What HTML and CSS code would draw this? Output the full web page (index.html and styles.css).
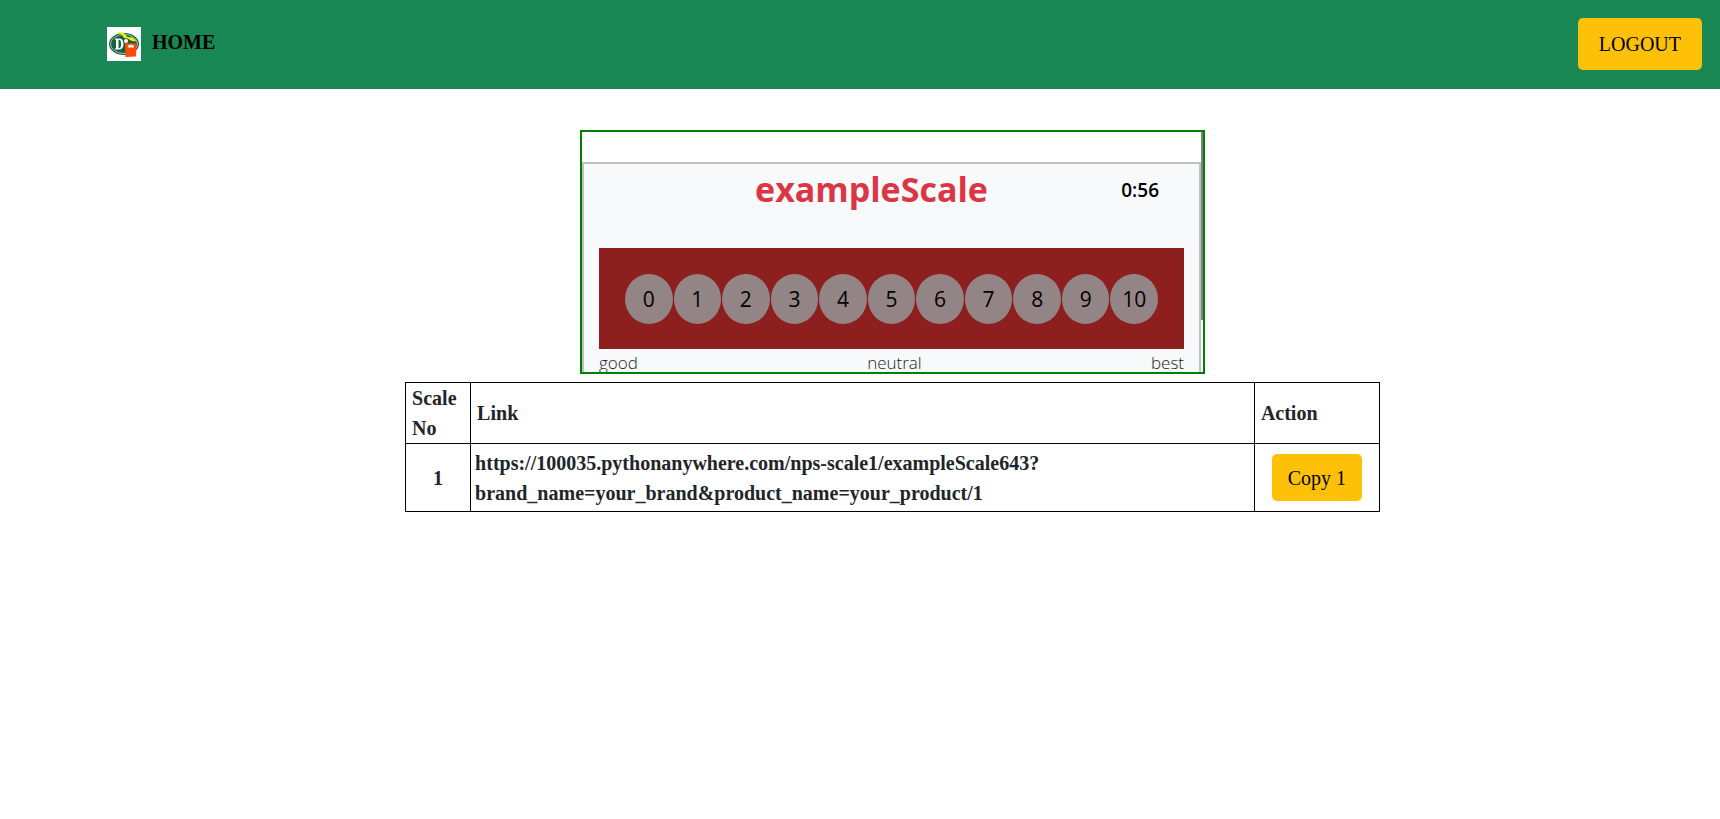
FILE: index.html
```html
<!DOCTYPE html>
<html lang="en">
<head>
<meta charset="utf-8">
<title>Scale links</title>
<link rel="stylesheet" href="styles.css">
</head>
<body>
<header class="navbar">
  <a class="brand" href="#">
    <svg class="logo" viewBox="0 0 34 34" aria-hidden="true">
      <rect width="34" height="34" fill="#fff"/>
      <ellipse cx="17" cy="17" rx="15" ry="11" fill="#17603f"/>
      <ellipse cx="17" cy="17" rx="13.500" ry="9.500" fill="none" stroke="#c4dccf" stroke-width=".8"/>
      <path fill="#fff" fill-rule="evenodd" d="M8 11.500h4c3 0 4.500 2 4.500 5.500s-1.500 5.500-4.500 5.500H8v-1l1-.5v-8L8 12.500zM11.500 12.700v8.600c2 .3 2.600-1.600 2.600-4.300s-.6-4.600-2.600-4.300z"/>
      <path d="M10 5l6 .5 4.500 4.500 5 .5 4.500 4-5-.5-4.500-2.500-3.500-.5-2-3z" fill="#f2ee12"/>
      <circle cx="19" cy="14" r="2" fill="#fff"/>
      <path d="M18 16l11.500.5-.5 13-10.500.5z" fill="#ff4a0a"/>
      <path d="M21 19c1-1.700 5-1.700 6 0l-1 2h-4z" fill="#fff"/>
      <path d="M23 21l1-1.500 1 1.500z" fill="#ff4a0a"/>
    </svg>
    <span>HOME</span>
  </a>
  <button class="btn btn-logout" type="button">LOGOUT</button>
</header>
<main class="content">
  <section class="preview" aria-label="Scale preview">
    <div class="scale-card">
      <div class="scale-head">
        <h1 class="scale-title">exampleScale</h1>
        <span class="timer">0:56</span>
      </div>
      <div class="scores">
        <button class="score" type="button">0</button>
        <button class="score" type="button">1</button>
        <button class="score" type="button">2</button>
        <button class="score" type="button">3</button>
        <button class="score" type="button">4</button>
        <button class="score" type="button">5</button>
        <button class="score" type="button">6</button>
        <button class="score" type="button">7</button>
        <button class="score" type="button">8</button>
        <button class="score" type="button">9</button>
        <button class="score" type="button">10</button>
      </div>
      <div class="labels"><span>good</span><span>neutral</span><span>best</span></div>
    </div>
    <div class="scroll-track"><div class="scroll-thumb"></div></div>
  </section>
  <table class="links">
    <thead>
      <tr><th class="col-no">Scale No</th><th>Link</th><th class="col-action">Action</th></tr>
    </thead>
    <tbody>
      <tr>
        <td class="number">1</td>
        <td class="url">https://100035.pythonanywhere.com/nps-scale1/exampleScale643?<wbr>brand_name=your_brand&amp;product_name=your_product/1</td>
        <td class="action"><button class="btn btn-copy" type="button">Copy 1</button></td>
      </tr>
    </tbody>
  </table>
</main>
</body>
</html>
```
FILE: styles.css
```css
* { box-sizing: border-box; }

body {
  margin: 0;
  background: #fff;
  color: #212529;
  font: 20px/30px "Liberation Serif", "Times New Roman", serif;
}

.navbar {
  display: flex;
  align-items: center;
  justify-content: space-between;
  padding: 18px 18px 19px 107px;
  background: #198754;
}

.brand {
  display: flex;
  gap: 11px;
  padding-bottom: 1px;
  color: #000;
  font-weight: bold;
  line-height: 30px;
  text-decoration: none;
}

.logo { width: 34px; height: 34px; }

.btn {
  border: 0;
  border-radius: 5px;
  background: #ffc107;
  color: #000;
  font: inherit;
}

.btn-logout { padding: 11px 21px; }
.btn-copy { padding: 9px 16px 8px; }

.content {
  display: flex;
  flex-direction: column;
  align-items: center;
  gap: 8px;
  padding: 41px 0 40px 65px;
}

.preview {
  display: flex;
  width: 625px;
  max-width: 100%;
  height: 244px;
  overflow: hidden;
  border: 2px solid #008000;
  font-family: "Open Sans", "Noto Sans", sans-serif;
}

.scale-card {
  flex: 1;
  height: 300px;
  margin-top: 30px;
  padding: 0 15px;
  border: 2px solid #c0c0c0;
  background: #f8f9fa;
}

.scale-head {
  display: grid;
  grid-template-columns: 1fr auto 1fr;
  height: 84px;
  padding: 0 25px;
}

.scale-title {
  grid-column: 2;
  margin: 0 40px 0 0;
  color: #dc3545;
  font-size: 34px;
  font-weight: bold;
  line-height: 50px;
}

.timer {
  justify-self: end;
  color: #000;
  font-size: 19px;
  font-weight: 600;
  line-height: 52px;
}

.scores {
  display: flex;
  gap: 1px;
  padding: 26px 26px 25px;
  background: #8d1f1f;
}

.score {
  flex: 1;
  height: 50px;
  padding: 0;
  border: 0;
  border-radius: 50%;
  background: #938585;
  color: #000;
  font: 21px/50px "Open Sans", "Noto Sans", sans-serif;
}

.labels {
  display: flex;
  justify-content: space-between;
  font-size: 17px;
  font-weight: 300;
  line-height: 27px;
}

.scroll-track { width: 2px; background: #fff; }
.scroll-thumb { height: 188px; background: #808080; }

.links {
  width: 58.9%;
  border-collapse: collapse;
  font-weight: bold;
}

.links th,
.links td { border: 1px solid #000; }
.links th { padding: 0 6px; text-align: left; }
.links td { padding: 0 4px; }
.links .number { text-align: center; }
.links .action { padding: 10px 16px; font-weight: normal; text-align: center; }
.col-no { width: 65px; }
.col-action { width: 125px; }
```
